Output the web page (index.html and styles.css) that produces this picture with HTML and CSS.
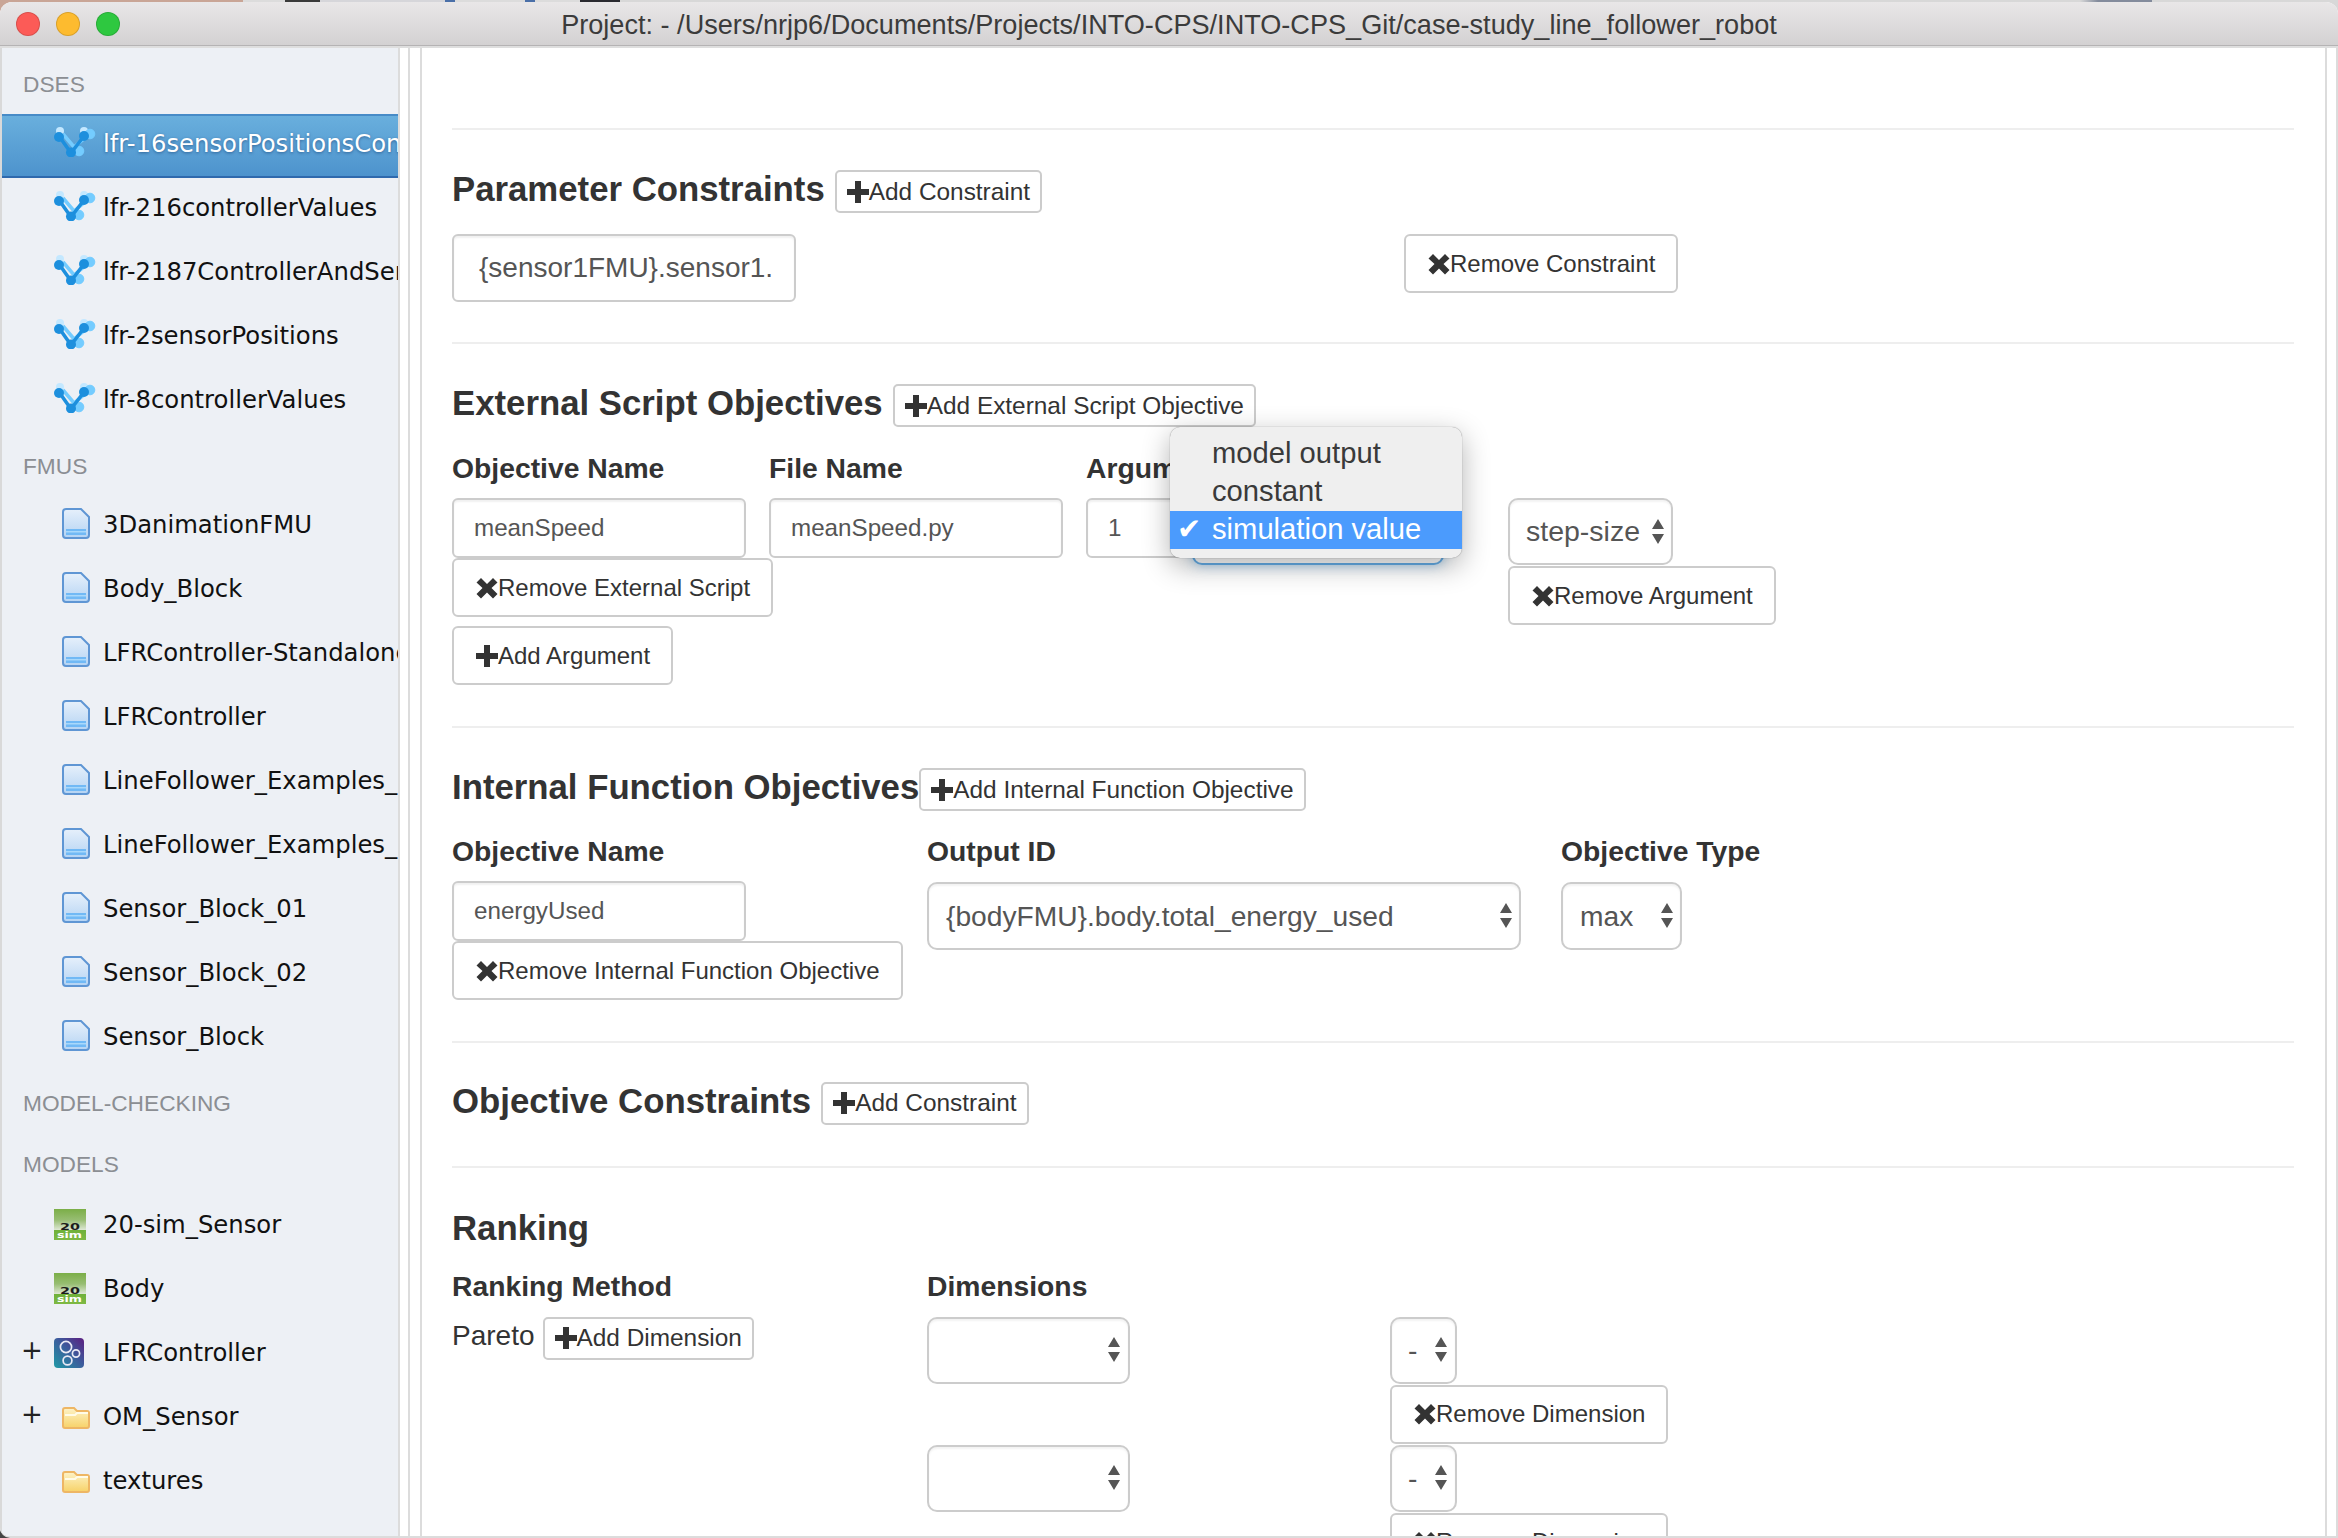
FILE: index.html
```html
<!DOCTYPE html>
<html lang="en">
<head>
<meta charset="utf-8">
<title>INTO-CPS</title>
<link rel="stylesheet" href="styles.css">
</head>
<body>
<svg class="defs" width="0" height="0" aria-hidden="true">
  <defs>
    <linearGradient id="docFill" x1="0" y1="0" x2="0" y2="1"><stop offset="0" stop-color="#e6f0fb"/><stop offset="1" stop-color="#b4d3f3"/></linearGradient>
    <linearGradient id="folderFill" x1="0" y1="0" x2="0" y2="1"><stop offset="0" stop-color="#fdf3c8"/><stop offset="1" stop-color="#f7d268"/></linearGradient>
    <linearGradient id="mmFill" x1="0" y1="1" x2="1" y2="0"><stop offset="0" stop-color="#1f9aa6"/><stop offset=".55" stop-color="#3d5a9c"/><stop offset="1" stop-color="#5c1e80"/></linearGradient>
    <linearGradient id="simFill" x1="0" y1="0" x2="0" y2="1"><stop offset="0" stop-color="#7bae47"/><stop offset=".35" stop-color="#97bd72"/><stop offset=".68" stop-color="#dfe8d6"/><stop offset=".69" stop-color="#6fb13a"/><stop offset="1" stop-color="#7fb944"/></linearGradient>
    <symbol id="i-dse" viewBox="0 0 42 30">
      <g fill="#c4e8ff">
        <circle cx="6" cy="4" r="4"/><circle cx="30" cy="4" r="4"/>
      </g>
      <g fill="#74ccff" stroke="#74ccff">
        <path d="M9 7 L20 20 L36 7" fill="none" stroke-width="3.500"/>
        <circle cx="36" cy="7" r="4.800"/><circle cx="25" cy="24" r="4.800"/>
      </g>
      <path d="M5 9 L17 26 L30 9" fill="none" stroke="#1d8fdd" stroke-width="3.500"/>
      <g fill="#1d8fdd">
        <circle cx="5" cy="10" r="5"/><circle cx="30" cy="9" r="5"/><circle cx="17" cy="25.500" r="5"/>
      </g>
    </symbol>
    <symbol id="i-doc" viewBox="0 0 28 31">
      <path d="M1 4a3 3 0 0 1 3-3h15l8 8v18a3 3 0 0 1-3 3H4a3 3 0 0 1-3-3z" fill="url(#docFill)" stroke="#5f96d4" stroke-width="2"/>
      <rect x="4" y="21" width="20" height="6" fill="#71b9f5"/>
      <rect x="4" y="23" width="20" height="1.500" fill="#a8d8fb"/>
    </symbol>
    <symbol id="i-folder" viewBox="0 0 28 22">
      <path d="M1 3a2 2 0 0 1 2-2h9l3 3h10a2 2 0 0 1 2 2v13a2 2 0 0 1-2 2H3a2 2 0 0 1-2-2z" fill="url(#folderFill)" stroke="#eeb664" stroke-width="2"/>
      <path d="M3 8h10l2-2h11" fill="none" stroke="#fffbe8" stroke-width="2"/>
    </symbol>
    <symbol id="i-mm" viewBox="0 0 30 30">
      <rect width="30" height="30" rx="4" fill="url(#mmFill)"/>
      <g fill="none" stroke="#e9e9f5" stroke-width="1.700">
        <circle cx="12" cy="9" r="5.600"/><circle cx="22" cy="15.500" r="3.600"/><circle cx="13.500" cy="22.500" r="4.400"/>
      </g>
    </symbol>
    <symbol id="i-plus" viewBox="0 0 22 22"><path d="M8 0h6v8h8v6h-8v8H8v-8H0V8h8z"/></symbol>
    <symbol id="i-x" viewBox="0 0 22 22"><path d="M5 1l6 6 6-6 4.500 4.500-6 5.500 6 6-4.500 4.500-6-6-6 6L.5 17l6-6-6-5.500z"/></symbol>
    <symbol id="i-arrows" viewBox="0 0 12 26"><path d="M6 0l6 10H0zM0 15h12l-6 10z"/></symbol>
  </defs>
</svg>
<div class="window">
  <header class="titlebar">
    <div class="lights"><span class="light red"></span><span class="light yellow"></span><span class="light green"></span></div>
    <div class="title">Project: - /Users/nrjp6/Documents/Projects/INTO-CPS/INTO-CPS_Git/case-study_line_follower_robot</div>
  </header>
  <div class="body">
    <aside class="sidebar">
      <div class="group g-first">DSES</div>
      <div class="item selected"><svg class="ic dse"><use href="#i-dse"/></svg><span>lfr-16sensorPositionsConstraints</span></div>
      <div class="item"><svg class="ic dse"><use href="#i-dse"/></svg><span>lfr-216controllerValues</span></div>
      <div class="item"><svg class="ic dse"><use href="#i-dse"/></svg><span>lfr-2187ControllerAndSensors</span></div>
      <div class="item"><svg class="ic dse"><use href="#i-dse"/></svg><span>lfr-2sensorPositions</span></div>
      <div class="item"><svg class="ic dse"><use href="#i-dse"/></svg><span>lfr-8controllerValues</span></div>
      <div class="group g-fmus">FMUS</div>
      <div class="item"><svg class="ic doc"><use href="#i-doc"/></svg><span>3DanimationFMU</span></div>
      <div class="item"><svg class="ic doc"><use href="#i-doc"/></svg><span>Body_Block</span></div>
      <div class="item"><svg class="ic doc"><use href="#i-doc"/></svg><span>LFRController-Standalone</span></div>
      <div class="item"><svg class="ic doc"><use href="#i-doc"/></svg><span>LFRController</span></div>
      <div class="item"><svg class="ic doc"><use href="#i-doc"/></svg><span>LineFollower_Examples_LineFollower</span></div>
      <div class="item"><svg class="ic doc"><use href="#i-doc"/></svg><span>LineFollower_Examples_Sensor</span></div>
      <div class="item"><svg class="ic doc"><use href="#i-doc"/></svg><span>Sensor_Block_01</span></div>
      <div class="item"><svg class="ic doc"><use href="#i-doc"/></svg><span>Sensor_Block_02</span></div>
      <div class="item"><svg class="ic doc"><use href="#i-doc"/></svg><span>Sensor_Block</span></div>
      <div class="group g-mc">MODEL-CHECKING</div>
      <div class="group g-models">MODELS</div>
      <div class="item"><svg class="ic sim" viewBox="0 0 32 31"><rect width="32" height="31" fill="url(#simFill)"/><text x="6" y="21" class="sim-20" textLength="20" lengthAdjust="spacingAndGlyphs">20</text><text x="3" y="28.500" class="sim-sim" textLength="25" lengthAdjust="spacingAndGlyphs">sim</text></svg><span>20-sim_Sensor</span></div>
      <div class="item"><svg class="ic sim" viewBox="0 0 32 31"><rect width="32" height="31" fill="url(#simFill)"/><text x="6" y="21" class="sim-20" textLength="20" lengthAdjust="spacingAndGlyphs">20</text><text x="3" y="28.500" class="sim-sim" textLength="25" lengthAdjust="spacingAndGlyphs">sim</text></svg><span>Body</span></div>
      <div class="item"><i class="twisty">+</i><svg class="ic mm"><use href="#i-mm"/></svg><span>LFRController</span></div>
      <div class="item"><i class="twisty">+</i><svg class="ic folder"><use href="#i-folder"/></svg><span>OM_Sensor</span></div>
      <div class="item"><svg class="ic folder"><use href="#i-folder"/></svg><span>textures</span></div>
    </aside>
    <div class="gutter"></div>
    <main class="main">
      <hr class="rule first">

      <div class="head-row"><h3>Parameter Constraints</h3><button class="btn small"><svg class="gl"><use href="#i-plus"/></svg>Add Constraint</button></div>
      <div class="constraint-row">
        <div class="input large constraint-input">{sensor1FMU}.sensor1.</div>
        <button class="btn"><svg class="gl"><use href="#i-x"/></svg>Remove Constraint</button>
      </div>
      <hr class="rule r2">

      <div class="head-row"><h3>External Script Objectives</h3><button class="btn small"><svg class="gl"><use href="#i-plus"/></svg>Add External Script Objective</button></div>
      <div class="ext-grid">
        <div class="label">Objective Name</div>
        <div class="label">File Name</div>
        <div class="label">Arguments</div>
        <div class="label"></div>
        <div class="stack">
          <div class="input name-input">meanSpeed</div>
          <button class="btn tight"><svg class="gl"><use href="#i-x"/></svg>Remove External Script</button>
          <button class="btn add-arg"><svg class="gl"><use href="#i-plus"/></svg>Add Argument</button>
        </div>
        <div><div class="input name-input">meanSpeed.py</div></div>
        <div class="arg-cell">
          <div class="input arg-input">1</div>
          <div class="select focus-select"></div>
        </div>
        <div class="stack">
          <div class="select step-select"><span>step-size</span><svg class="arrows"><use href="#i-arrows"/></svg></div>
          <button class="btn flush"><svg class="gl"><use href="#i-x"/></svg>Remove Argument</button>
        </div>
      </div>
      <div class="popup">
        <div class="opt">model output</div>
        <div class="opt">constant</div>
        <div class="opt chosen"><b>✔</b>simulation value</div>
      </div>
      <hr class="rule r3">

      <div class="head-row"><h3 class="nogap">Internal Function Objectives</h3><button class="btn small"><svg class="gl"><use href="#i-plus"/></svg>Add Internal Function Objective</button></div>
      <div class="int-grid">
        <div class="label">Objective Name</div>
        <div class="label">Output ID</div>
        <div class="label">Objective Type</div>
        <div class="stack">
          <div class="input name-input">energyUsed</div>
          <button class="btn tight"><svg class="gl"><use href="#i-x"/></svg>Remove Internal Function Objective</button>
        </div>
        <div class="select output-select"><span>{bodyFMU}.body.total_energy_used</span><svg class="arrows"><use href="#i-arrows"/></svg></div>
        <div class="select max-select"><span>max</span><svg class="arrows"><use href="#i-arrows"/></svg></div>
      </div>
      <hr class="rule r4">

      <div class="head-row obj-head"><h3>Objective Constraints</h3><button class="btn small"><svg class="gl"><use href="#i-plus"/></svg>Add Constraint</button></div>
      <hr class="rule r5">

      <h3 class="rank-head">Ranking</h3>
      <div class="rank-grid">
        <div class="label">Ranking Method</div>
        <div class="label">Dimensions</div>
        <div class="pareto"><span>Pareto</span><button class="btn small"><svg class="gl"><use href="#i-plus"/></svg>Add Dimension</button></div>
        <div class="dims">
          <div class="dim-row">
            <div class="select dim-select"><span></span><svg class="arrows"><use href="#i-arrows"/></svg></div>
            <div class="stack">
              <div class="select dash-select"><span>-</span><svg class="arrows"><use href="#i-arrows"/></svg></div>
              <button class="btn dim-btn"><svg class="gl"><use href="#i-x"/></svg>Remove Dimension</button>
            </div>
          </div>
          <div class="dim-row">
            <div class="select dim-select"><span></span><svg class="arrows"><use href="#i-arrows"/></svg></div>
            <div class="stack">
              <div class="select dash-select"><span>-</span><svg class="arrows"><use href="#i-arrows"/></svg></div>
              <button class="btn dim-btn"><svg class="gl"><use href="#i-x"/></svg>Remove Dimension</button>
            </div>
          </div>
        </div>
      </div>
    </main>
    <div class="edge"></div>
  </div>
</div>
</body>
</html>
```

FILE: styles.css
```css
* { box-sizing: border-box; }
html, body { margin: 0; height: 100%; overflow: hidden; }
body {
  background:
    linear-gradient(90deg, #c9a596 0 243px, #dcdcdc 243px 285px, #3a3a3a 285px 320px, #d6d6da 320px 445px, #4a6fa8 445px 455px, #dcdcdc 455px 525px, #4a6fa8 525px 535px, #dcdcdc 535px 580px, #2a2a30 580px 620px, #d8d8d8 620px 2080px, #838b9c 2098px 2152px, #d8d8d8 2152px 2338px) top / 100% 20px no-repeat,
    #444;
  font-family: "Liberation Sans", Arial, sans-serif;
  color: #333;
  padding-top: 2px;
}
.defs { position: absolute; }
.window {
  height: 1536px;
  display: flex;
  flex-direction: column;
  background: #fff;
  border-radius: 12px 12px 0 10px;
  overflow: hidden;
  border-bottom: 2px solid #dcdcdc;
}
.titlebar {
  height: 46px;
  flex: none;
  display: flex;
  align-items: center;
  background: linear-gradient(#e9e7e8, #d3d1d2);
  border-bottom: 2px solid #dedede;
  box-shadow: inset 0 -1px 0 #b5b3b4;
}
.lights { display: flex; gap: 16px; padding-left: 16px; width: 16px; flex: none; }
.light { flex: none; width: 24px; height: 24px; border-radius: 50%; border: 1px solid rgba(0,0,0,.14); }
.red { background: #fc5b57; }
.yellow { background: #fdbb2f; }
.green { background: #2ec840; }
.title { flex: 1; padding: 2px 16px 0 0; text-align: center; font-size: 27.100px; color: #3b3b3b; white-space: nowrap; }

.body { flex: 1; display: flex; min-height: 0; }

/* Sidebar */
.sidebar {
  flex: none;
  width: 400px;
  background: #edf0f5;
  border-left: 2px solid #d9d9d9;
  border-right: 2px solid #dcdcdc;
  padding-top: 2px;
  font-family: "DejaVu Sans", Verdana, sans-serif;
  overflow: hidden;
}
.group {
  font-family: "Liberation Sans", Arial, sans-serif;
  font-size: 22.700px;
  color: #8b8e93;
  height: 40px;
  line-height: 34px;
  padding-left: 21px;
}
.g-first { line-height: 40px; margin-top: 14px; margin-bottom: 10px; }
.g-fmus { margin-top: 15px; margin-bottom: 6px; }
.g-mc { margin-top: 15px; }
.g-models { margin-top: 21px; margin-bottom: 8px; }
.item {
  position: relative;
  height: 64px;
  display: flex;
  align-items: center;
  padding: 0 0 6px 101px;
  font-size: 24.300px;
  color: #111;
  white-space: nowrap;
  overflow: hidden;
}
.item span { display: block; }
.item.selected {
  background: linear-gradient(#69afdd, #4d93cd);
  border-top: 2px solid #478bc7;
  border-bottom: 2px solid #2f69ad;
  color: #fff;
  text-shadow: 0 1px 3px rgba(20,60,110,.6);
}
.ic { position: absolute; display: block; }
.dse { left: 52px; top: 13px; width: 42px; height: 30px; }
.selected .dse { top: 11px; }
.doc { left: 60px; top: 13px; width: 28px; height: 31px; }
.sim { left: 52px; top: 14px; width: 32px; height: 31px; }
.mm { left: 52px; top: 15px; width: 30px; height: 30px; }
.folder { left: 60px; top: 20px; width: 28px; height: 22px; }
.sim-20 { font: 700 8.500px "DejaVu Sans", sans-serif; fill: #1c1c1c; }
.sim-sim { font: 700 8.500px "DejaVu Sans", sans-serif; fill: #fff; }
.twisty { position: absolute; left: 19px; top: 12px; font-style: normal; font-size: 26px; color: #222; }

.gutter {
  flex: none;
  width: 22px;
  background: linear-gradient(90deg, #fff 8px, #dcdcdc 8px 10px, #fff 10px);
  border-right: 2px solid #dcdcdc;
}
.edge {
  flex: none;
  width: 13px;
  border-left: 2px solid #dcdcdc;
  border-right: 2px solid #dcdcdc;
}

/* Main */
.main { flex: 1; min-width: 0; position: relative; padding: 80px 31px 0 30px; overflow: hidden; }
.rule { border: 0; height: 2px; background: #eee; margin: 0; }
.r2 { margin-top: 40px; }
.r3 { margin-top: 41px; }
.r4 { margin-top: 41px; }
.r5 { margin-top: 41px; }

.head-row { display: flex; align-items: center; margin-top: 40px; height: 43px; }
.head-row.obj-head { margin-top: 38.500px; }
h3 { margin: 0; font-size: 34.750px; font-weight: 700; line-height: 40px; color: #333; white-space: nowrap; }
.head-row h3 { margin-bottom: 5px; }
h3 + .btn { margin-left: 10px; }
h3.nogap + .btn { margin-left: 0; }

.btn {
  display: inline-flex;
  align-items: center;
  width: max-content;
  height: 59px;
  padding: 0 21px 0 22px;
  font: 400 24px "Liberation Sans", Arial, sans-serif;
  color: #333;
  background: #fff;
  border: 2px solid #ccc;
  border-radius: 6px;
  white-space: nowrap;
}
.btn.small { height: 43px; padding: 0 10px; border-radius: 5px; font-size: 24.400px; }
.gl { width: 22px; height: 22px; flex: none; fill: #333; }
.tight { margin-top: 0; }
.flush { margin-top: 1px; }
.add-arg { margin-top: 9px; }

.input {
  display: flex;
  align-items: center;
  background: #fff;
  border: 2px solid #ccc;
  border-radius: 6px;
  color: #555;
  font-size: 24.200px;
  box-shadow: inset 0 2px 2px rgba(0,0,0,.06);
  white-space: nowrap;
  overflow: hidden;
}
.large { font-size: 28px; }
.constraint-row { display: grid; grid-template-columns: 952px auto; justify-content: start; margin-top: 21px; height: 68px; }
.constraint-input { width: 344px; height: 68px; padding-left: 25px; }
.name-input { width: 294px; height: 60px; padding: 0 0 1px 20px; }
.arg-input { width: 100px; height: 60px; padding: 0 0 1px 20px; }

.label { font-size: 28.300px; font-weight: 700; height: 40px; line-height: 40px; color: #333; white-space: nowrap; }
.stack { display: flex; flex-direction: column; align-items: flex-start; }

.ext-grid { display: grid; grid-template-columns: 317px 317px 422px auto; justify-content: start; margin-top: 21px; row-gap: 10px; }
.arg-cell { display: flex; gap: 6px; align-items: flex-start; }

.select {
  display: flex;
  align-items: center;
  justify-content: space-between;
  height: 67px;
  background: #fff;
  border: 2px solid #ccc;
  border-radius: 10px;
  color: #555;
  font-size: 28.200px;
  white-space: nowrap;
  box-shadow: inset 0 2px 2px rgba(0,0,0,.05);
}
.arrows { width: 12px; height: 26px; flex: none; fill: #555; }
.focus-select { width: 252px; border-color: #66afe9; box-shadow: 0 0 12px rgba(102,175,233,.6); }
.step-select { width: 165px; padding: 0 7px 0 16px; font-size: 28.500px; }

.popup {
  position: absolute;
  left: 748px;
  top: 379px;
  width: 292px;
  height: 131px;
  padding-top: 8px;
  background: #efefef;
  border-radius: 10px;
  box-shadow: 0 0 1px rgba(0,0,0,.5), 0 8px 28px rgba(0,0,0,.3);
  font-size: 29.200px;
  color: #3a3a3a;
}
.opt { height: 38px; line-height: 37px; padding-left: 42px; white-space: nowrap; position: relative; }
.opt.chosen { background: #4b9bfd; color: #fff; }
.opt b { position: absolute; left: 7px; top: 0; font-weight: 400; font-family: "DejaVu Sans", sans-serif; font-size: 29px; }

.int-grid { display: grid; grid-template-columns: 475px 634px auto; justify-content: start; margin-top: 20px; row-gap: 10px; }
.output-select { width: 594px; height: 68px; margin-top: 1px; padding: 0 7px 0 17px; }
.max-select { width: 121px; height: 68px; margin-top: 1px; padding: 0 7px 0 17px; }

.rank-head { margin-top: 40px; }
.rank-grid { display: grid; grid-template-columns: 475px auto; justify-content: start; margin-top: 18px; row-gap: 11px; }
.pareto { display: flex; align-items: flex-start; gap: 8px; font-size: 28px; line-height: 38px; color: #333; }
.dims { display: flex; flex-direction: column; gap: 1px; }
.dim-row { display: grid; grid-template-columns: 463px auto; }
.dim-select { width: 203px; padding: 0 8px 0 16px; }
.dash-select { width: 67px; padding: 0 8px 0 16px; }
.dim-btn { margin-top: 1px; }
```
